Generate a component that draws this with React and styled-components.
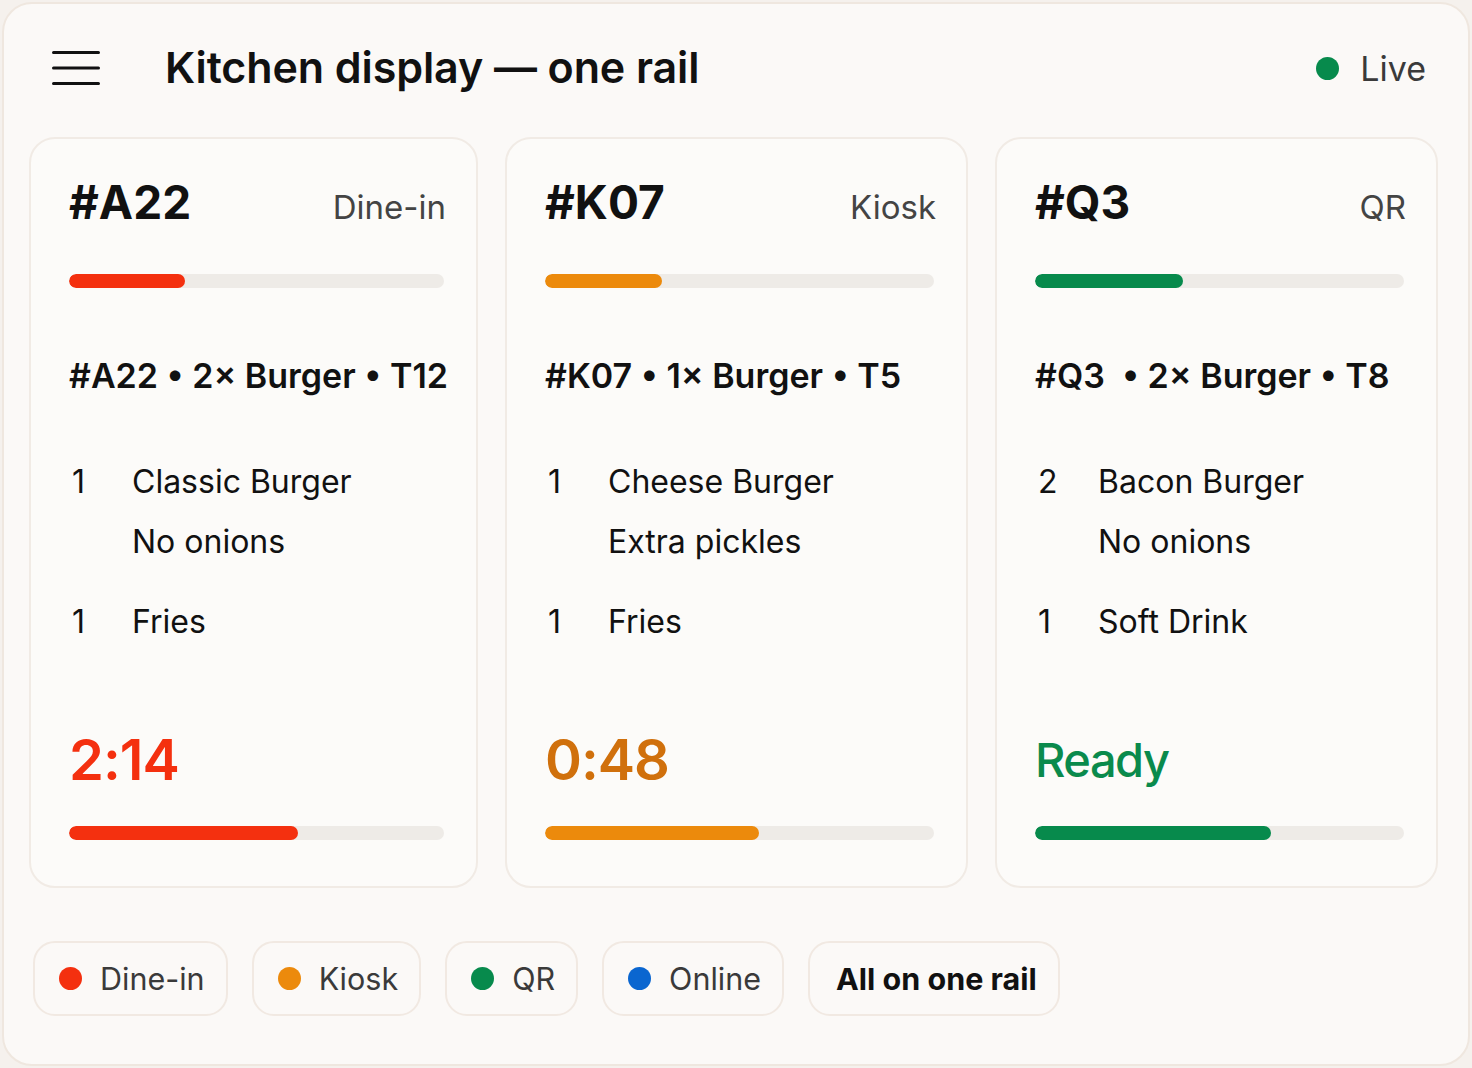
import React from "react";
import styled, { createGlobalStyle } from "styled-components";

const GlobalStyle = createGlobalStyle`
  html, body {
    margin: 0;
    padding: 0;
    background: #f5f1ed;
  }
  body {
    font-family: Inter, "Noto Sans", "Liberation Sans", sans-serif;
    color: #111;
    -webkit-font-smoothing: antialiased;
  }
`;

const TONES = {
  red: { bar: "#f4300f", text: "#f4300f" },
  orange: { bar: "#ec8a0c", text: "#d0700c" },
  green: { bar: "#078a4c", text: "#0a8a4c" },
  blue: { bar: "#0a66d0", text: "#0a66d0" },
};

const tickets = [
  {
    id: "#A22",
    source: "Dine-in",
    tone: "red",
    progress: 31,
    summary: "#A22 • 2× Burger • T12",
    items: [
      { qty: 1, name: "Classic Burger", note: "No onions" },
      { qty: 1, name: "Fries" },
    ],
    timer: "2:14",
    elapsed: 61,
  },
  {
    id: "#K07",
    source: "Kiosk",
    tone: "orange",
    progress: 30,
    summary: "#K07 • 1× Burger • T5",
    items: [
      { qty: 1, name: "Cheese Burger", note: "Extra pickles" },
      { qty: 1, name: "Fries" },
    ],
    timer: "0:48",
    elapsed: 55,
  },
  {
    id: "#Q3",
    source: "QR",
    tone: "green",
    progress: 40,
    summary: "#Q3  • 2× Burger • T8",
    items: [
      { qty: 2, name: "Bacon Burger", note: "No onions" },
      { qty: 1, name: "Soft Drink" },
    ],
    timer: "Ready",
    ready: true,
    elapsed: 64,
  },
];

const legend = [
  { label: "Dine-in", tone: "red" },
  { label: "Kiosk", tone: "orange" },
  { label: "QR", tone: "green" },
  { label: "Online", tone: "blue" },
];

export default function App() {
  return (
    <>
      <GlobalStyle />
      <Panel>
        <TopBar>
          <MenuIcon width="48" height="34" viewBox="0 0 48 34" fill="none">
            <path
              d="M1.5 1.5H46.5M1.5 17H46.5M1.5 32.5H46.5"
              stroke="#111"
              strokeWidth="3"
              strokeLinecap="round"
            />
          </MenuIcon>
          <Title>Kitchen display — one rail</Title>
          <LiveStatus>
            <Dot $color={TONES.green.bar} />
            Live
          </LiveStatus>
        </TopBar>

        <Rail>
          {tickets.map((t) => (
            <Ticket key={t.id}>
              <TicketHead>
                <TicketId>{t.id}</TicketId>
                <Source>{t.source}</Source>
              </TicketHead>
              <Track>
                <Fill $color={TONES[t.tone].bar} style={{ width: `${t.progress}%` }} />
              </Track>
              <Summary>{t.summary}</Summary>
              <Items>
                {t.items.map((item) => (
                  <Item key={item.name}>
                    <Qty>{item.qty}</Qty>
                    <ItemName>{item.name}</ItemName>
                    {item.note && <Note>{item.note}</Note>}
                  </Item>
                ))}
              </Items>
              <Timer $color={TONES[t.tone].text} $ready={t.ready}>
                {t.timer}
              </Timer>
              <Track $bottom>
                <Fill $color={TONES[t.tone].bar} style={{ width: `${t.elapsed}%` }} />
              </Track>
            </Ticket>
          ))}
        </Rail>

        <Legend>
          {legend.map((l) => (
            <Chip key={l.label}>
              <Dot $color={TONES[l.tone].bar} />
              {l.label}
            </Chip>
          ))}
          <Chip $strong>All on one rail</Chip>
        </Legend>
      </Panel>
    </>
  );
}

const Panel = styled.div`
  box-sizing: border-box;
  margin: 2px;
  width: 1468px;
  height: 1064px;
  border: 2px solid #efe7df;
  border-radius: 30px;
  background: #fbf9f7;
  display: flex;
  flex-direction: column;
`;

const TopBar = styled.header`
  height: 133px;
  display: flex;
  align-items: center;
  padding: 0 42px 0 48px;
  box-sizing: border-box;
`;

const MenuIcon = styled.svg`
  flex: none;
  margin-top: -5px;
`;

const Title = styled.h1`
  margin: -6px 0 0 65px;
  font-size: 43px;
  font-weight: 600;
  letter-spacing: -0.1px;
  line-height: 1;
`;

const LiveStatus = styled.div`
  margin-left: auto;
  display: flex;
  align-items: center;
  gap: 21px;
  font-size: 34px;
  color: #3a3a3a;
  margin-top: -4px;
`;

const Dot = styled.span`
  flex: none;
  width: 23px;
  height: 23px;
  border-radius: 50%;
  background: ${(p) => p.$color};
`;

const Rail = styled.section`
  display: grid;
  grid-template-columns: 449px 463px 443px;
  gap: 27px;
  padding-left: 25px;
`;

const Ticket = styled.article`
  box-sizing: border-box;
  height: 751px;
  border: 2px solid #f1ebe5;
  border-radius: 26px;
  background: #fcfbf9;
  padding: 35px 30px 46px 38px;
  display: flex;
  flex-direction: column;
`;

const TicketHead = styled.div`
  display: flex;
  align-items: baseline;
  justify-content: space-between;
  height: 56px;
  line-height: 56px;
`;

const TicketId = styled.div`
  font-size: 46px;
  font-weight: 700;
`;

const Source = styled.div`
  font-size: 33px;
  color: #444;
  margin-top: -3px;
`;

const Track = styled.div`
  margin-top: ${(p) => (p.$bottom ? "31px" : "44px")};
  margin-right: 2px;
  height: 14px;
  border-radius: 7px;
  background: #eeebe7;
  overflow: hidden;
`;

const Fill = styled.div`
  height: 100%;
  border-radius: 7px;
  background: ${(p) => p.$color};
`;

const Summary = styled.div`
  margin-top: 66px;
  font-size: 34px;
  font-weight: 600;
  line-height: 44px;
  white-space: pre;
`;

const Items = styled.div`
  margin-top: 64px;
  display: flex;
  flex-direction: column;
  gap: 40px;
`;

const Item = styled.div`
  display: grid;
  grid-template-columns: 63px 1fr;
  row-gap: 20px;
  font-size: 32px;
  line-height: 40px;
`;

const Qty = styled.span`
  padding-left: 3px;
`;

const ItemName = styled.span``;

const Note = styled.span`
  grid-column: 2;
`;

const Timer = styled.div`
  margin-top: auto;
  height: 70px;
  line-height: 70px;
  font-size: ${(p) => (p.$ready ? "47px" : "56px")};
  font-weight: ${(p) => (p.$ready ? 500 : 600)};
  letter-spacing: ${(p) => (p.$ready ? "-1.5px" : "-1px")};
  color: ${(p) => p.$color};
`;

const Legend = styled.footer`
  display: flex;
  gap: 24px;
  margin: 53px 0 0 29px;
`;

const Chip = styled.div`
  box-sizing: border-box;
  height: 75px;
  display: flex;
  align-items: center;
  gap: 18px;
  padding: 0 21px 0 ${(p) => (p.$strong ? "26px" : "24px")};
  border: 2px solid #f1e9e2;
  border-radius: 22px;
  font-size: 30.5px;
  font-weight: ${(p) => (p.$strong ? 700 : 400)};
  color: ${(p) => (p.$strong ? "#111" : "#3a3a3a")};
`;
